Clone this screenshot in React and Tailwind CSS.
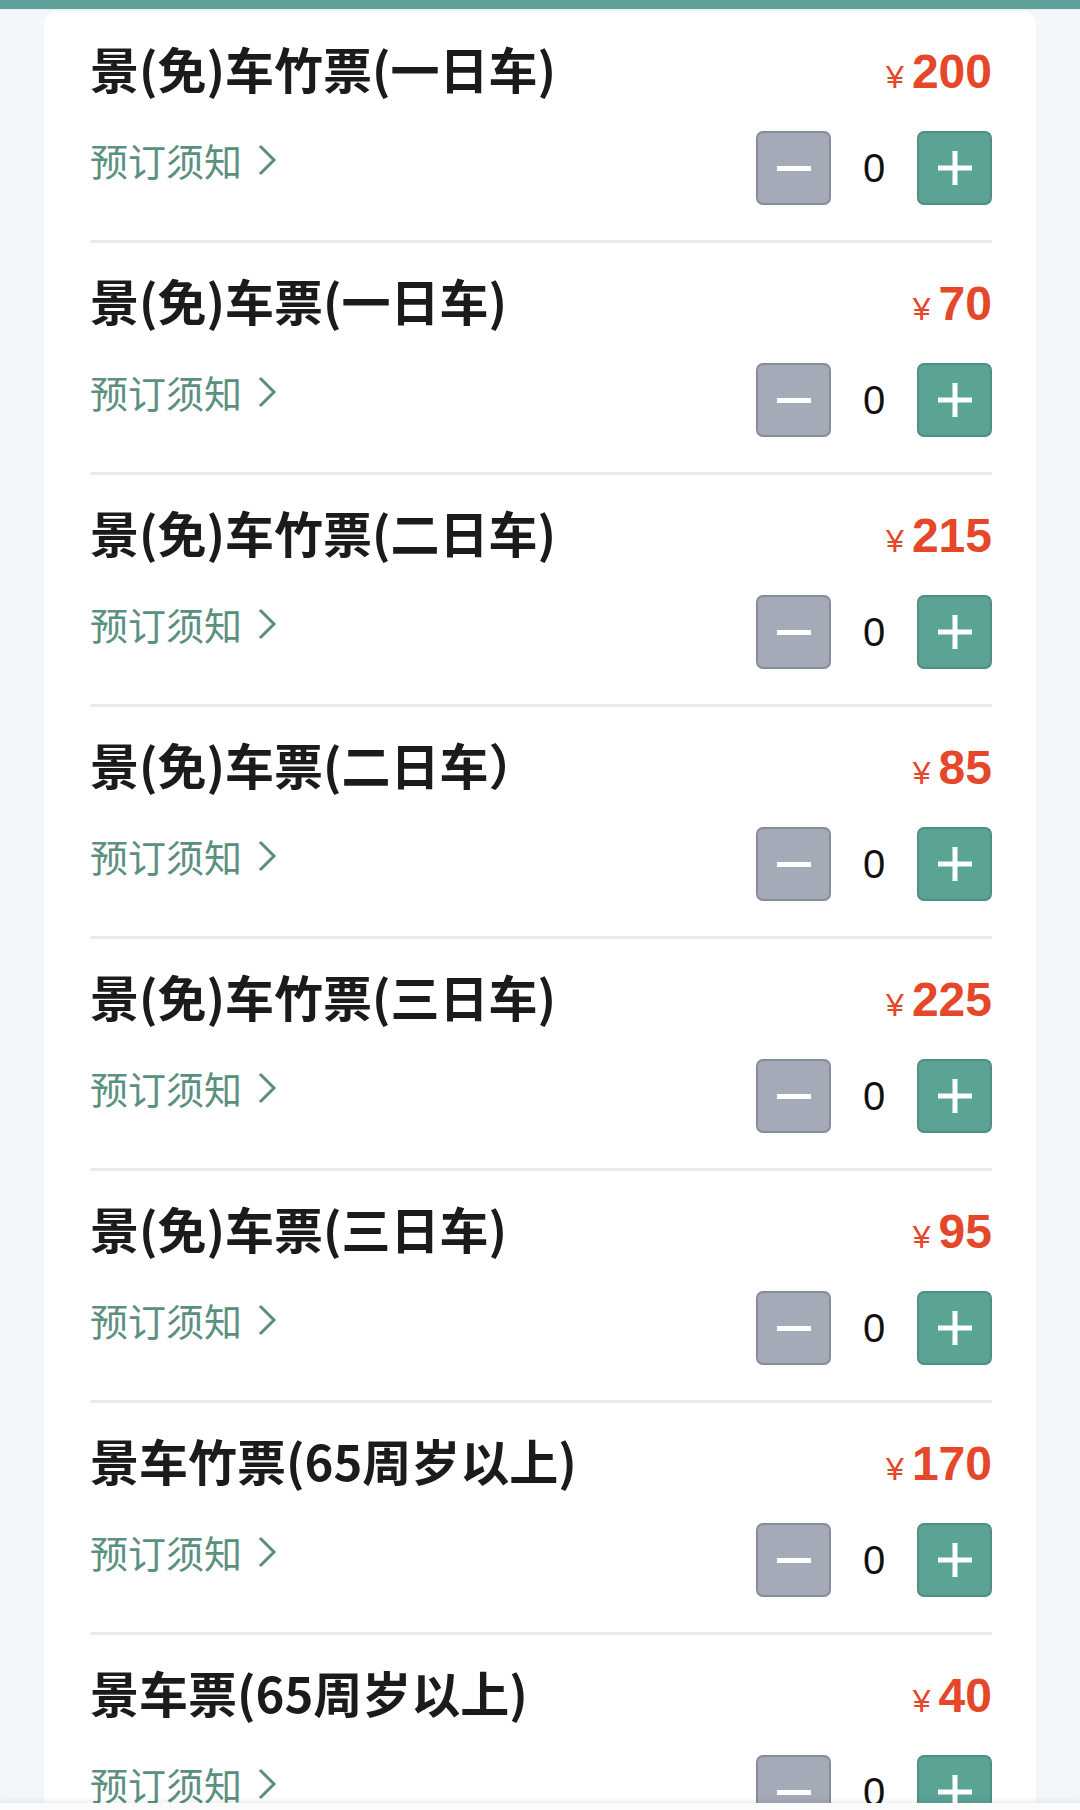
import React, { useState } from "react";

const tickets = [
  { name: "景(免)车竹票(一日车)", price: 200 },
  { name: "景(免)车票(一日车)", price: 70 },
  { name: "景(免)车竹票(二日车)", price: 215 },
  { name: "景(免)车票(二日车）", price: 85 },
  { name: "景(免)车竹票(三日车)", price: 225 },
  { name: "景(免)车票(三日车)", price: 95 },
  { name: "景车竹票(65周岁以上)", price: 170 },
  { name: "景车票(65周岁以上)", price: 40 },
];

function TicketRow({ ticket, count, onChange }) {
  return (
    <div className="pt-[35px] pb-[35px] border-b-[3px] border-[#ebebeb]">
      <div className="flex justify-between items-center h-[56px]">
        <div className="pb-[14px] text-[49px] font-bold text-[#1b1b1b] leading-none [font-family:'Noto_Sans_CJK_SC',sans-serif]">
          {ticket.name}
        </div>
        <div className="flex items-baseline text-[#e5472b] [font-family:'Liberation_Sans',Arial,sans-serif]">
          <span className="text-[32px] mr-[8px]">¥</span>
          <span className="text-[48px] font-bold leading-none">{ticket.price}</span>
        </div>
      </div>
      <div className="flex justify-between items-center mt-[29px] h-[74px]">
        <button className="flex items-center gap-[15px] pb-[16px] text-[38px] text-[#5b8f81] leading-none [font-family:'Noto_Sans_CJK_SC',sans-serif]">
          预订须知
          <svg width="20" height="32" viewBox="0 0 20 32" fill="none">
            <path d="M3 2 L17 16 L3 30" stroke="#5b8f81" strokeWidth="3" />
          </svg>
        </button>
        <div className="flex items-center">
          <button
            onClick={() => onChange(Math.max(0, count - 1))}
            className="w-[75px] h-[74px] rounded-[7px] bg-[#a5aab9] border-2 border-[#878c9a] flex items-center justify-center"
          >
            <span className="block w-[34px] h-[5px] bg-white" />
          </button>
          <span className="w-[86px] text-center text-[40px] text-[#111] [font-family:'Liberation_Sans',Arial,sans-serif]">
            {count}
          </span>
          <button
            onClick={() => onChange(count + 1)}
            className="w-[75px] h-[74px] rounded-[7px] bg-[#5ba395] border-2 border-[#4e9184] flex items-center justify-center"
          >
            <svg width="34" height="34" viewBox="0 0 34 34">
              <path d="M17 0 V34 M0 17 H34" stroke="white" strokeWidth="5" />
            </svg>
          </button>
        </div>
      </div>
    </div>
  );
}

export default function App() {
  const [counts, setCounts] = useState(tickets.map(() => 0));

  return (
    <div className="h-[1810px] overflow-hidden bg-[#f4f7fa]">
      <div className="h-[9px] bg-[#5e9f99]" />
      <div className="h-[2px] bg-[#e8f4f6]" />
      <div className="mx-[44px] bg-white rounded-t-[14px] pl-[46px] pr-[44px]">
        {tickets.map((t, i) => (
          <TicketRow
            key={t.name}
            ticket={t}
            count={counts[i]}
            onChange={(v) => setCounts(counts.map((c, j) => (j === i ? v : c)))}
          />
        ))}
      </div>
      <div className="fixed bottom-0 left-0 right-0 h-[7px] bg-[#fbfbfb] shadow-[0_-2px_6px_rgba(0,0,0,0.08)]" />
    </div>
  );
}
